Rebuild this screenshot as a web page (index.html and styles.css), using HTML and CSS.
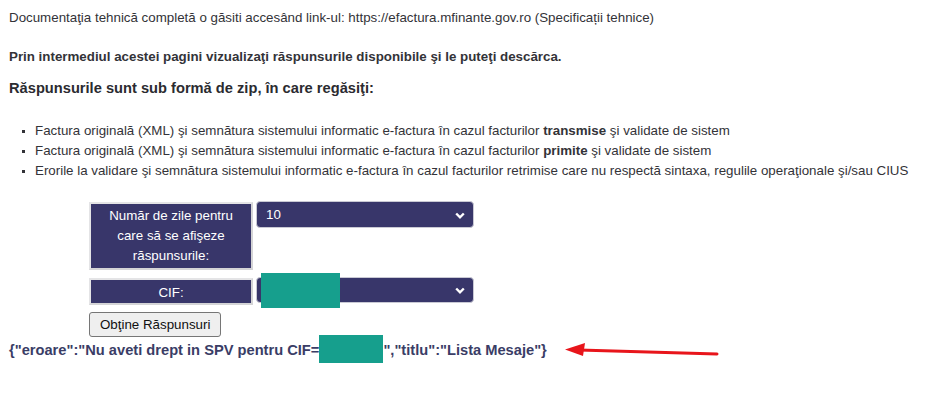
FILE: index.html
```html
<!DOCTYPE html>
<html lang="ro">

<head>
  <meta charset="UTF-8">
  <meta name="viewport" content="width=device-width, initial-scale=1.0">
  <title>Lista Mesaje | SPV e-Factura</title>
  <link rel="stylesheet" href="styles.css">
</head>

<body>
  <div class="page">
    <p class="doc-line">Documentaţia tehnică completă o găsiti accesând link-ul: https://efactura.mfinante.gov.ro (Specificații tehnice)</p>

    <p class="intro">Prin intermediul acestei pagini vizualizaţi răspunsurile disponibile şi le puteţi descărca.</p>
    <h3 class="zip-title">Răspunsurile sunt sub formă de zip, în care regăsiţi:</h3>

    <ul class="zip-list">
      <li>Factura originală (XML) şi semnătura sistemului informatic e-factura în cazul facturilor <b>transmise</b> şi validate de sistem</li>
      <li>Factura originală (XML) şi semnătura sistemului informatic e-factura în cazul facturilor <b>primite</b> şi validate de sistem</li>
      <li>Erorile la validare şi semnătura sistemului informatic e-factura în cazul facturilor retrimise care nu respectă sintaxa, regulile operaţionale şi/sau CIUS</li>
    </ul>

    <form class="resp-form">
      <div class="form-grid">
        <div class="form-label">Număr de zile pentru care să se afişeze răspunsurile:</div>
        <div class="form-field">
          <div class="select-box">
            <span>10</span>
            <svg class="chevron" width="10" height="7" viewBox="0 0 10 7"><path d="M1.2 1.5 L5 5.3 L8.8 1.5" fill="none" stroke="#fff" stroke-width="2.4"/></svg>
          </div>
        </div>

        <div class="form-label label-short">CIF:</div>
        <div class="form-field">
          <div class="select-box select-short">
            <span></span>
            <svg class="chevron" width="10" height="7" viewBox="0 0 10 7"><path d="M1.2 1.5 L5 5.3 L8.8 1.5" fill="none" stroke="#fff" stroke-width="2.4"/></svg>
          </div>
          <div class="redact redact-cif"></div>
        </div>
      </div>

      <button type="button" class="btn-get">Obţine Răspunsuri</button>
    </form>

    <div class="json-out">{"eroare":"Nu aveti drept in SPV pentru CIF=<span class="redact redact-inline"></span>","titlu":"Lista Mesaje"}</div>

    <!-- sageata rosie -->
    <svg class="arrow" width="160" height="20" viewBox="0 0 160 20">
      <line x1="14" y1="7" x2="152" y2="11" stroke="#e8151b" stroke-width="3" stroke-linecap="round"/>
      <polygon points="0,6.5 20,0 18,13" fill="#e8151b"/>
    </svg>
  </div>
</body>

</html>
```

FILE: styles.css
```css
:root {
  --text: #333338;
  --navy: #38366a;
  --json: #3a3d66;
  --teal: #169f8d;
}

body {
  margin: 0;
  font-family: 'Liberation Sans', Arial, sans-serif;
  font-size: 13.33px;
  color: var(--text);
  background: #fff;
}

.page {
  position: relative;
  padding: 10px 9px 0;
}

.doc-line {
  margin: 0;
  line-height: 16px;
}

.intro {
  margin: 23px 0 0;
  line-height: 16px;
  font-weight: bold;
}

.zip-title {
  margin: 13px 0 0;
  font-size: 14.67px;
  line-height: 20px;
  color: #2b2b30;
}

.zip-list {
  margin: 23px 0 0;
  padding-left: 26px;
  list-style: square;
  line-height: 20px;
}

.zip-list li::marker {
  font-size: 10px;
}

.resp-form {
  margin: 20px 0 0 80px;
}

.form-grid {
  display: grid;
  grid-template-columns: 164px 218px;
  column-gap: 3px;
  row-gap: 7px;
}

.form-label {
  background: var(--navy);
  color: #fff;
  text-align: center;
  line-height: 20px;
  padding: 2px 10px;
  border: 2px solid #d4d4d6;
  border-top-color: #e4e4e6;
  border-left-color: #e4e4e6;
  margin-top: 1px;
}

.label-short {
  padding: 3px 10px 0;
}

.form-field {
  position: relative;
}

.select-box {
  display: flex;
  align-items: center;
  justify-content: space-between;
  height: 27px;
  box-sizing: border-box;
  padding: 0 8px 0 9px;
  background: var(--navy);
  color: #fff;
  border: 1px solid #c9c9d4;
  border-radius: 4px;
}

.select-short {
  height: 26px;
}

.chevron {
  margin-top: 1px;
}

.redact {
  background: var(--teal);
}

.redact-cif {
  position: absolute;
  left: 5px;
  top: -4px;
  width: 79px;
  height: 35px;
}

.btn-get {
  margin-top: 7px;
  padding: 3px 10px;
  height: 25px;
  font-family: 'Liberation Sans', Arial, sans-serif;
  font-size: 13.33px;
  color: #111;
  background: #efefef;
  border: 1px solid #767676;
  border-radius: 3px;
}

.json-out {
  margin-top: 2px;
  font-size: 14.67px;
  font-weight: bold;
  line-height: 22px;
  color: var(--json);
}

.redact-inline {
  display: inline-block;
  width: 64px;
  height: 28px;
  vertical-align: middle;
  margin-top: -4px;
}

.arrow {
  position: absolute;
  left: 565px;
  top: 343px;
}
```
